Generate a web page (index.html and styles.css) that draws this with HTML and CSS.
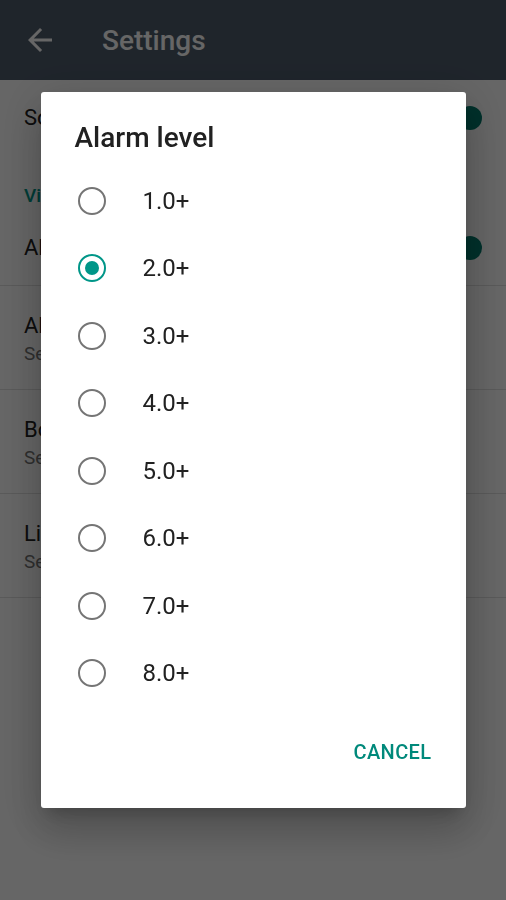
FILE: index.html
```html
<!DOCTYPE html>
<html>

<head>
    <meta content="text/html; charset=utf-8" http-equiv="Content-Type">
    <title>Settings</title>
    <link rel="stylesheet" href="styles.css">
</head>

<body>
<div class="appBar">
    <svg class="backIcon" viewBox="0 0 24 24" width="36" height="36">
        <path d="M20 11H7.83l5.59-5.59L12 4l-8 8 8 8 1.41-1.41L7.83 13H20v-2z" fill="#fff"/>
    </svg>
    <div class="appTitle">Settings</div>
</div>

<div class="settingsList">
    <div class="switchRow">
        <div class="rowTitle">Sound</div>
        <div class="switchTrack"><div class="switchThumb"></div></div>
    </div>
    <div class="category">Vibration</div>
    <div class="switchRow divided">
        <div class="rowTitle">Alarm vibration</div>
        <div class="switchTrack"><div class="switchThumb"></div></div>
    </div>
    <div class="prefRow">
        <div class="rowTitle">Alarm level</div>
        <div class="rowSummary">Select alarm level</div>
    </div>
    <div class="prefRow">
        <div class="rowTitle">Border level</div>
        <div class="rowSummary">Select border level</div>
    </div>
    <div class="prefRow">
        <div class="rowTitle">Limit</div>
        <div class="rowSummary">Select limit</div>
    </div>
</div>

<div class="scrim">
    <div class="dialog">
        <div class="dialogTitle">Alarm level</div>
        <div class="choiceList">
            <div class="choice"><span class="radio"></span><span class="choiceLabel">1.0+</span></div>
            <div class="choice"><span class="radio checked"></span><span class="choiceLabel">2.0+</span></div>
            <div class="choice"><span class="radio"></span><span class="choiceLabel">3.0+</span></div>
            <div class="choice"><span class="radio"></span><span class="choiceLabel">4.0+</span></div>
            <div class="choice"><span class="radio"></span><span class="choiceLabel">5.0+</span></div>
            <div class="choice"><span class="radio"></span><span class="choiceLabel">6.0+</span></div>
            <div class="choice"><span class="radio"></span><span class="choiceLabel">7.0+</span></div>
            <div class="choice"><span class="radio"></span><span class="choiceLabel">8.0+</span></div>
        </div>
        <div class="dialogActions">
            <button class="textButton">CANCEL</button>
        </div>
    </div>
</div>
</body>

</html>
```

FILE: styles.css
```css
body {
    margin: 0;
    width: 506px;
    height: 900px;
    background: #ffffff;
    font-family: Roboto, "Liberation Sans", sans-serif;
    overflow: hidden;
}

.appBar {
    display: flex;
    align-items: center;
    height: 80px;
    background: #4e5c6c;
}

.backIcon {
    display: block;
    margin-left: 22px;
}

.appTitle {
    margin-left: 44px;
    font-size: 28px;
    font-weight: 500;
    color: #ffffff;
}

.settingsList {
    display: block;
}

.switchRow {
    display: flex;
    align-items: center;
    justify-content: space-between;
    height: 76px;
    padding-left: 24px;
    padding-right: 26px;
}

.divided {
    border-bottom: 1px solid #e0e0e0;
    height: 75px;
}

.rowTitle {
    font-size: 22px;
    line-height: 24px;
    color: #212121;
}

.rowSummary {
    margin-top: 6px;
    font-size: 19px;
    line-height: 20px;
    color: #757575;
}

.category {
    padding: 30px 24px 4px 24px;
    font-size: 19px;
    line-height: 20px;
    font-weight: 500;
    color: #009688;
}

.prefRow {
    height: 75px;
    padding: 28px 24px 0 24px;
    border-bottom: 1px solid #e0e0e0;
}

.switchTrack {
    position: relative;
    width: 48px;
    height: 20px;
    border-radius: 10px;
    background: #80cbc4;
}

.switchThumb {
    position: absolute;
    right: -2px;
    top: -2px;
    width: 24px;
    height: 24px;
    border-radius: 50%;
    background: #00796b;
}

.scrim {
    position: fixed;
    left: 0;
    top: 0;
    width: 506px;
    height: 900px;
    display: flex;
    align-items: center;
    justify-content: center;
    background: rgba(0, 0, 0, 0.6);
}

.dialog {
    width: 425px;
    background: #ffffff;
    border-radius: 3px;
    box-shadow: 0 11px 15px -7px rgba(0, 0, 0, 0.2), 0 24px 38px 3px rgba(0, 0, 0, 0.14), 0 9px 46px 8px rgba(0, 0, 0, 0.12);
}

.dialogTitle {
    padding: 30px 34px 0 34px;
    font-size: 28px;
    line-height: 32px;
    font-weight: 500;
    color: #212121;
}

.choiceList {
    margin-top: 13px;
}

.choice {
    display: flex;
    align-items: center;
    height: 67.5px;
    padding-left: 37px;
}

.radio {
    box-sizing: border-box;
    display: flex;
    align-items: center;
    justify-content: center;
    width: 28px;
    height: 28px;
    border: 2.5px solid #757575;
    border-radius: 50%;
}

.radio.checked {
    border-color: #009688;
}

.radio.checked::after {
    content: "";
    width: 14px;
    height: 14px;
    border-radius: 50%;
    background: #009688;
}

.choiceLabel {
    margin-left: 37px;
    font-size: 24px;
    color: #212121;
}

.dialogActions {
    display: flex;
    justify-content: flex-end;
    padding: 20px 34px 31px 34px;
}

.textButton {
    padding: 15px 0;
    border: none;
    background: none;
    font-family: Roboto, "Liberation Sans", sans-serif;
    font-size: 20px;
    line-height: 20px;
    font-weight: 500;
    letter-spacing: 0.4px;
    color: #00897b;
}
```
